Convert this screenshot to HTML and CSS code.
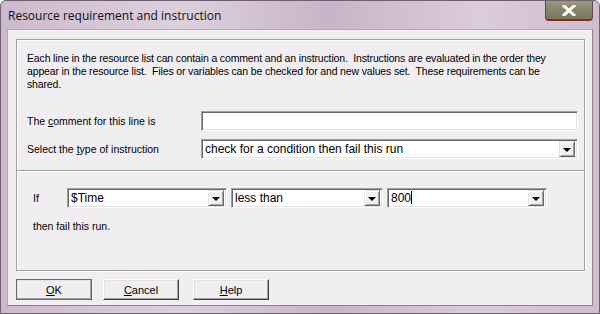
FILE: index.html
```html
<!DOCTYPE html>
<html lang="en">
<head>
    <meta charset="UTF-8">
    <title>Resource requirement and instruction</title>
    <link rel="stylesheet" href="styles.css">
</head>
<body>
    <div class="window">
        <div class="titlebar">
            <span class="title">Resource requirement and instruction</span>
            <div class="close-btn">
                <svg width="14" height="11" viewBox="0 0 14 11">
                    <path d="M2 1 L12 10 M12 1 L2 10" stroke="#fff" stroke-width="3" stroke-linecap="square"/>
                </svg>
            </div>
        </div>
        <div class="client">
            <div class="group">
                <div class="group-top">
                    <p class="intro">Each line in the resource list can contain a comment and an instruction.&nbsp; Instructions are evaluated in the order they<br>appear in the resource list.&nbsp; Files or variables can be checked for and new values set.&nbsp; These requirements can be<br>shared.</p>
                    <div class="row">
                        <label class="row-label">The <u>c</u>omment for this line is</label>
                        <div class="field"></div>
                    </div>
                    <div class="row">
                        <label class="row-label">Select the <u>t</u>ype of instruction</label>
                        <div class="combo combo-wide">
                            <span class="combo-text">check for a condition then fail this run</span>
                            <span class="arrow"></span>
                        </div>
                    </div>
                </div>
                <div class="group-bottom">
                    <div class="cond-row">
                        <span class="if-label">If</span>
                        <div class="combo combo-var">
                            <span class="combo-text">$Time</span>
                            <span class="arrow"></span>
                        </div>
                        <div class="combo combo-op">
                            <span class="combo-text">less than</span>
                            <span class="arrow"></span>
                        </div>
                        <div class="combo combo-val">
                            <span class="combo-text">800<span class="caret"></span></span>
                            <span class="arrow"></span>
                        </div>
                    </div>
                    <p class="then">then fail this run.</p>
                </div>
            </div>
            <div class="buttons">
                <button class="btn btn-default"><u>O</u>K</button>
                <button class="btn"><u>C</u>ancel</button>
                <button class="btn btn-help"><u>H</u>elp</button>
            </div>
        </div>
    </div>
</body>
</html>
```

FILE: styles.css
```css
body {
    margin: 0;
    font-family: "Liberation Sans", Arial, sans-serif;
    font-size: 10.5px;
    color: #000;
}
.window {
    width: 600px;
    height: 314px;
    box-sizing: border-box;
    background: linear-gradient(90deg, #cdb9cd 0%, #ddd0dd 30%, #c8b4c8 55%, #dccbdc 80%, #cfbccf 100%);
    border: 1px solid #6f5f6f;
    border-radius: 6px 6px 0 0;
    display: flex;
    flex-direction: column;
}
.titlebar {
    height: 28px;
    display: flex;
    align-items: flex-start;
    justify-content: space-between;
}
.title {
    font-family: "Open Sans", "Liberation Sans", sans-serif;
    font-size: 12px;
    margin: 6px 0 0 7px;
    color: #111;
}
.close-btn {
    width: 46px;
    height: 18px;
    margin-right: 6px;
    background: linear-gradient(#9a987e, #85856a 50%, #76775c);
    border: 1px solid #5e4a4a;
    border-top: none;
    border-bottom: 2px solid #8a2a1a;
    border-radius: 0 0 4px 4px;
    display: flex;
    align-items: center;
    justify-content: center;
}
.client {
    flex: 1;
    margin: 0 6px 7px 6px;
    background: #f0eef1;
    border: 1px solid #8f828f;
    border-top-color: #b8a8b8;
    border-left-color: #b8a8b8;
    padding: 9px 7px 0 8px;
}
.group {
    border: 1px solid #a0a0a0;
    box-shadow: 1px 1px 0 #fff, inset 1px 1px 0 #fff;
    height: 232px;
    box-sizing: border-box;
}
.group-top {
    padding: 12px 6px 11px 10px;
    border-bottom: 1px solid #a0a0a0;
    box-shadow: 0 1px 0 #fff;
}
.intro {
    margin: 0 0 20px 0;
    line-height: 13px;
    letter-spacing: -0.15px;
    white-space: nowrap;
}
.row {
    display: flex;
    align-items: center;
    margin-bottom: 8px;
}
.row:last-child {
    margin-bottom: 0;
}
.row-label {
    width: 174px;
}
.field,
.combo {
    height: 20px;
    box-sizing: border-box;
    background: #fff;
    border-top: 1px solid #a0a0a0;
    border-left: 1px solid #a0a0a0;
    border-right: 1px solid #fff;
    border-bottom: 1px solid #fff;
    box-shadow: inset 1px 1px 0 #696969, inset -1px -1px 0 #e3e3e3;
}
.field {
    flex: 1;
}
.combo {
    display: flex;
    align-items: center;
    padding: 2px 2px 2px 3px;
}
.combo-wide {
    flex: 1;
}
.combo-text {
    flex: 1;
    font-size: 12px;
    white-space: nowrap;
    overflow: hidden;
}
.arrow {
    width: 16px;
    height: 16px;
    box-sizing: border-box;
    background: #f0eef1;
    border-top: 1px solid #e3e3e3;
    border-left: 1px solid #e3e3e3;
    border-right: 1px solid #696969;
    border-bottom: 1px solid #696969;
    box-shadow: inset 1px 1px 0 #fff, inset -1px -1px 0 #a0a0a0;
    position: relative;
}
.arrow::after {
    content: "";
    position: absolute;
    left: 3px;
    top: 6px;
    border-left: 4px solid transparent;
    border-right: 4px solid transparent;
    border-top: 4px solid #000;
}
.group-bottom {
    padding: 17px 0 0 16px;
}
.cond-row {
    display: flex;
    align-items: center;
    gap: 4px;
}
.if-label {
    width: 30px;
}
.combo-var {
    width: 160px;
}
.combo-op {
    width: 152px;
}
.combo-val {
    width: 160px;
}
.caret {
    display: inline-block;
    width: 1px;
    height: 13px;
    background: #000;
    vertical-align: -2px;
}
.then {
    margin: 12px 0 0 0;
    line-height: 13px;
}
.buttons {
    display: flex;
    gap: 11px;
    margin-top: 8px;
}
.btn {
    width: 76px;
    height: 21px;
    padding: 0;
    font-family: "Liberation Sans", Arial, sans-serif;
    font-size: 11px;
    background: #f0eef1;
    border-top: 1px solid #fff;
    border-left: 1px solid #fff;
    border-right: 1px solid #404040;
    border-bottom: 1px solid #404040;
    box-shadow: inset -1px -1px 0 #a0a0a0, inset 1px 1px 0 #e3e3e3;
}
.btn-default {
    outline: 1px solid #6a6a6a;
    outline-offset: -1px;
}
.btn-help {
    margin-left: 3px;
}
```
